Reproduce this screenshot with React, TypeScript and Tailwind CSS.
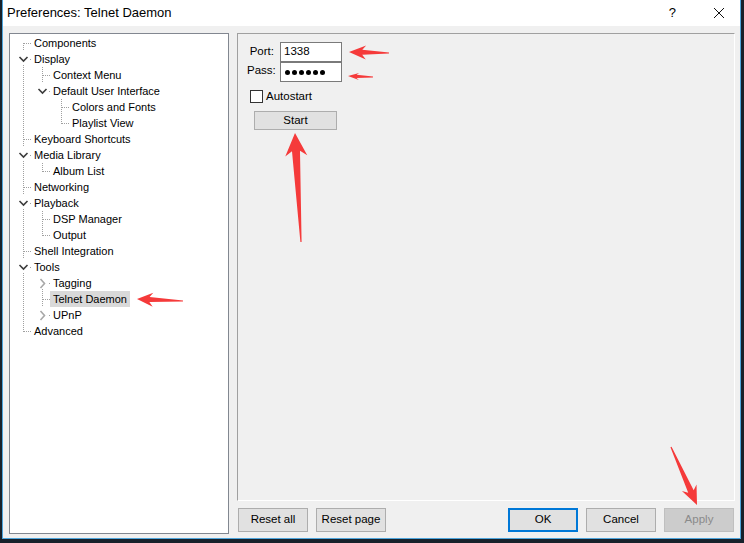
import React from "react"

type Node = {
  label: string
  depth: number
  expander?: "open" | "closed"
  selected?: boolean
}

const nodes: Node[] = [
  { label: "Components", depth: 0 },
  { label: "Display", depth: 0, expander: "open" },
  { label: "Context Menu", depth: 1 },
  { label: "Default User Interface", depth: 1, expander: "open" },
  { label: "Colors and Fonts", depth: 2 },
  { label: "Playlist View", depth: 2 },
  { label: "Keyboard Shortcuts", depth: 0 },
  { label: "Media Library", depth: 0, expander: "open" },
  { label: "Album List", depth: 1 },
  { label: "Networking", depth: 0 },
  { label: "Playback", depth: 0, expander: "open" },
  { label: "DSP Manager", depth: 1 },
  { label: "Output", depth: 1 },
  { label: "Shell Integration", depth: 0 },
  { label: "Tools", depth: 0, expander: "open" },
  { label: "Tagging", depth: 1, expander: "closed" },
  { label: "Telnet Daemon", depth: 1, selected: true },
  { label: "UPnP", depth: 1, expander: "closed" },
  { label: "Advanced", depth: 0 },
]

// does the branch at `level` continue below row i?
function continues(i: number, level: number) {
  for (let j = i + 1; j < nodes.length; j++) {
    if (nodes[j].depth < level) return false
    if (nodes[j].depth === level) return true
  }
  return false
}

const LINE = "#a0a0a0"

function VLine({ y1, y2 }: { y1: number; y2: number }) {
  return (
    <line x1={11.5} x2={11.5} y1={y1} y2={y2} stroke={LINE} strokeWidth={1} strokeDasharray="1 1" shapeRendering="crispEdges" />
  )
}

function HLine({ x1, x2 }: { x1: number; x2: number }) {
  return (
    <line x1={x1} x2={x2} y1={8.5} y2={8.5} stroke={LINE} strokeWidth={1} strokeDasharray="1 1" shapeRendering="crispEdges" />
  )
}

function TreeRow({ node, index }: { node: Node; index: number }) {
  const cells = []
  for (let k = 0; k < node.depth; k++) {
    cells.push(
      <svg key={k} width={19} height={16} className="shrink-0">
        {continues(index, k) && <VLine y1={0} y2={16} />}
      </svg>
    )
  }
  const hasNext = continues(index, node.depth)
  cells.push(
    <svg key="own" width={19} height={16} className="shrink-0">
      {node.expander ? (
        <>
          {hasNext && <VLine y1={14} y2={16} />}
          <HLine x1={18} x2={19} />
          {node.expander === "open" ? (
            <polyline points="7.5,6 11.5,10 15.5,6" fill="none" stroke="#3c3c3c" strokeWidth={1.6} />
          ) : (
            <polyline points="9.5,4 13.5,8.5 9.5,13" fill="none" stroke="#a8a8a8" strokeWidth={1.6} />
          )}
        </>
      ) : (
        <>
          {index > 0 && <VLine y1={0} y2={9} />}
          {hasNext && <VLine y1={8} y2={16} />}
          <HLine x1={12} x2={19} />
        </>
      )}
    </svg>
  )
  return (
    <div className="flex h-[16px] items-center">
      {cells}
      <span
        className={`h-[16px] leading-[16px] pl-[3px] pr-[3px] whitespace-nowrap ${
          node.selected ? "bg-[#d9d9d9]" : ""
        }`}
      >
        {node.label}
      </span>
    </div>
  )
}

function arrow(x1: number, y1: number, x2: number, y2: number, head: number, hw: number, sw: number) {
  const len = Math.hypot(x2 - x1, y2 - y1)
  const ux = (x2 - x1) / len
  const uy = (y2 - y1) / len
  const nx = -uy
  const ny = ux
  const bx = x2 - ux * head
  const by = y2 - uy * head
  const kx = x2 - ux * head * 0.78
  const ky = y2 - uy * head * 0.78
  const pts = [
    [x2, y2],
    [bx + nx * hw, by + ny * hw],
    [kx + nx * sw, ky + ny * sw],
    [x1 + nx * 0.6, y1 + ny * 0.6],
    [x1 - nx * 0.6, y1 - ny * 0.6],
    [kx - nx * sw, ky - ny * sw],
    [bx - nx * hw, by - ny * hw],
  ]
  return pts.map((p) => p.join(",")).join(" ")
}

function Button({
  children,
  variant = "normal",
}: {
  children: React.ReactNode
  variant?: "normal" | "default" | "disabled"
}) {
  const look =
    variant === "default"
      ? "border-2 border-[#0078d7] bg-[#e1e1e1] text-black"
      : variant === "disabled"
      ? "border border-[#bfbfbf] bg-[#cccccc] text-[#8a8a8a]"
      : "border border-[#adadad] bg-[#e1e1e1] text-black"
  return <div className={`w-[70px] h-[24px] flex items-center justify-center ${look}`}>{children}</div>
}

export default function App() {
  return (
    <div
      className="relative w-[744px] h-[543px] bg-[#17212b] overflow-hidden text-[11px] text-black"
      style={{ fontFamily: '"Liberation Sans", Arial, sans-serif' }}
    >
      <div className="ml-[2px] w-[739px] h-[539px] bg-[#f0f0f0] border-x border-b border-[#4ea5dc] flex flex-col">
        {/* title bar */}
        <div className="h-[26px] bg-white flex items-center pl-[4px] shrink-0">
          <span className="text-[13px] text-black">Preferences: Telnet Daemon</span>
          <span className="ml-auto mr-[37px] text-[13px] text-black">?</span>
          <svg width={12} height={12} className="mr-[15px]">
            <path d="M1 1 L11 11 M11 1 L1 11" stroke="#111" strokeWidth={1} />
          </svg>
        </div>

        <div className="flex-1 flex pt-[7px] pl-[6px] gap-[8px]">
          {/* page tree */}
          <div className="w-[220px] h-[501px] border border-[#828790] bg-white pl-[2px] pt-[1px]">
            {nodes.map((n, i) => (
              <TreeRow key={n.label} node={n} index={i} />
            ))}
          </div>

          <div className="w-[498px] flex flex-col gap-[7px]">
            {/* settings page */}
            <div className="h-[468px] border-t border-l border-[#a0a0a0] border-b border-r border-b-white border-r-white pt-[8px]">
              <div className="grid grid-cols-[27px_62px] gap-x-[6px] pl-[9px] items-center">
                <span className="text-right text-[11.5px]">Port:</span>
                <div className="h-[20px] border border-[#7a7a7a] bg-white pl-[3px] flex items-center text-[11.5px]">1338</div>
                <span className="text-right text-[11.5px] -mt-[3px]">Pass:</span>
                <div className="h-[20px] border border-[#7a7a7a] bg-white pl-[4px] flex items-center gap-[2px]">
                  {[0, 1, 2, 3, 4, 5].map((d) => (
                    <span key={d} className="w-[5px] h-[5px] rounded-full bg-black" />
                  ))}
                </div>
              </div>
              <label className="h-[13px] flex items-center gap-[3px] mt-[8px] ml-[12px]">
                <span className="w-[13px] h-[13px] border border-[#333] bg-white" />
                <span className="text-[11.5px]">Autostart</span>
              </label>
              <div className="mt-[8px] ml-[16px] w-[83px] h-[19px] border border-[#adadad] bg-[#e1e1e1] flex items-center justify-center text-[11.5px]">
                Start
              </div>
            </div>

            {/* dialog buttons */}
            <div className="h-[24px] flex px-[1px] text-[11.5px]">
              <div className="flex gap-[8px]">
                <Button>Reset all</Button>
                <Button>Reset page</Button>
              </div>
              <div className="ml-auto flex gap-[8px]">
                <Button variant="default">OK</Button>
                <Button>Cancel</Button>
                <Button variant="disabled">Apply</Button>
              </div>
            </div>
          </div>
        </div>
      </div>

      {/* annotation arrows */}
      <svg className="absolute inset-0 pointer-events-none" width={744} height={543}>
        <g fill="#f53a3a">
          <polygon points={arrow(389, 53, 349, 52, 17, 7, 2.5)} />
          <polygon points={arrow(373, 77, 348, 76, 11, 3.5, 1.6)} />
          <polygon points={arrow(301, 242, 295, 133, 23, 11, 4)} />
          <polygon points={arrow(183, 301, 137, 299, 16, 7, 2.5)} />
          <polygon points={arrow(671, 447, 697, 505, 19, 8, 3)} />
        </g>
      </svg>
    </div>
  )
}
